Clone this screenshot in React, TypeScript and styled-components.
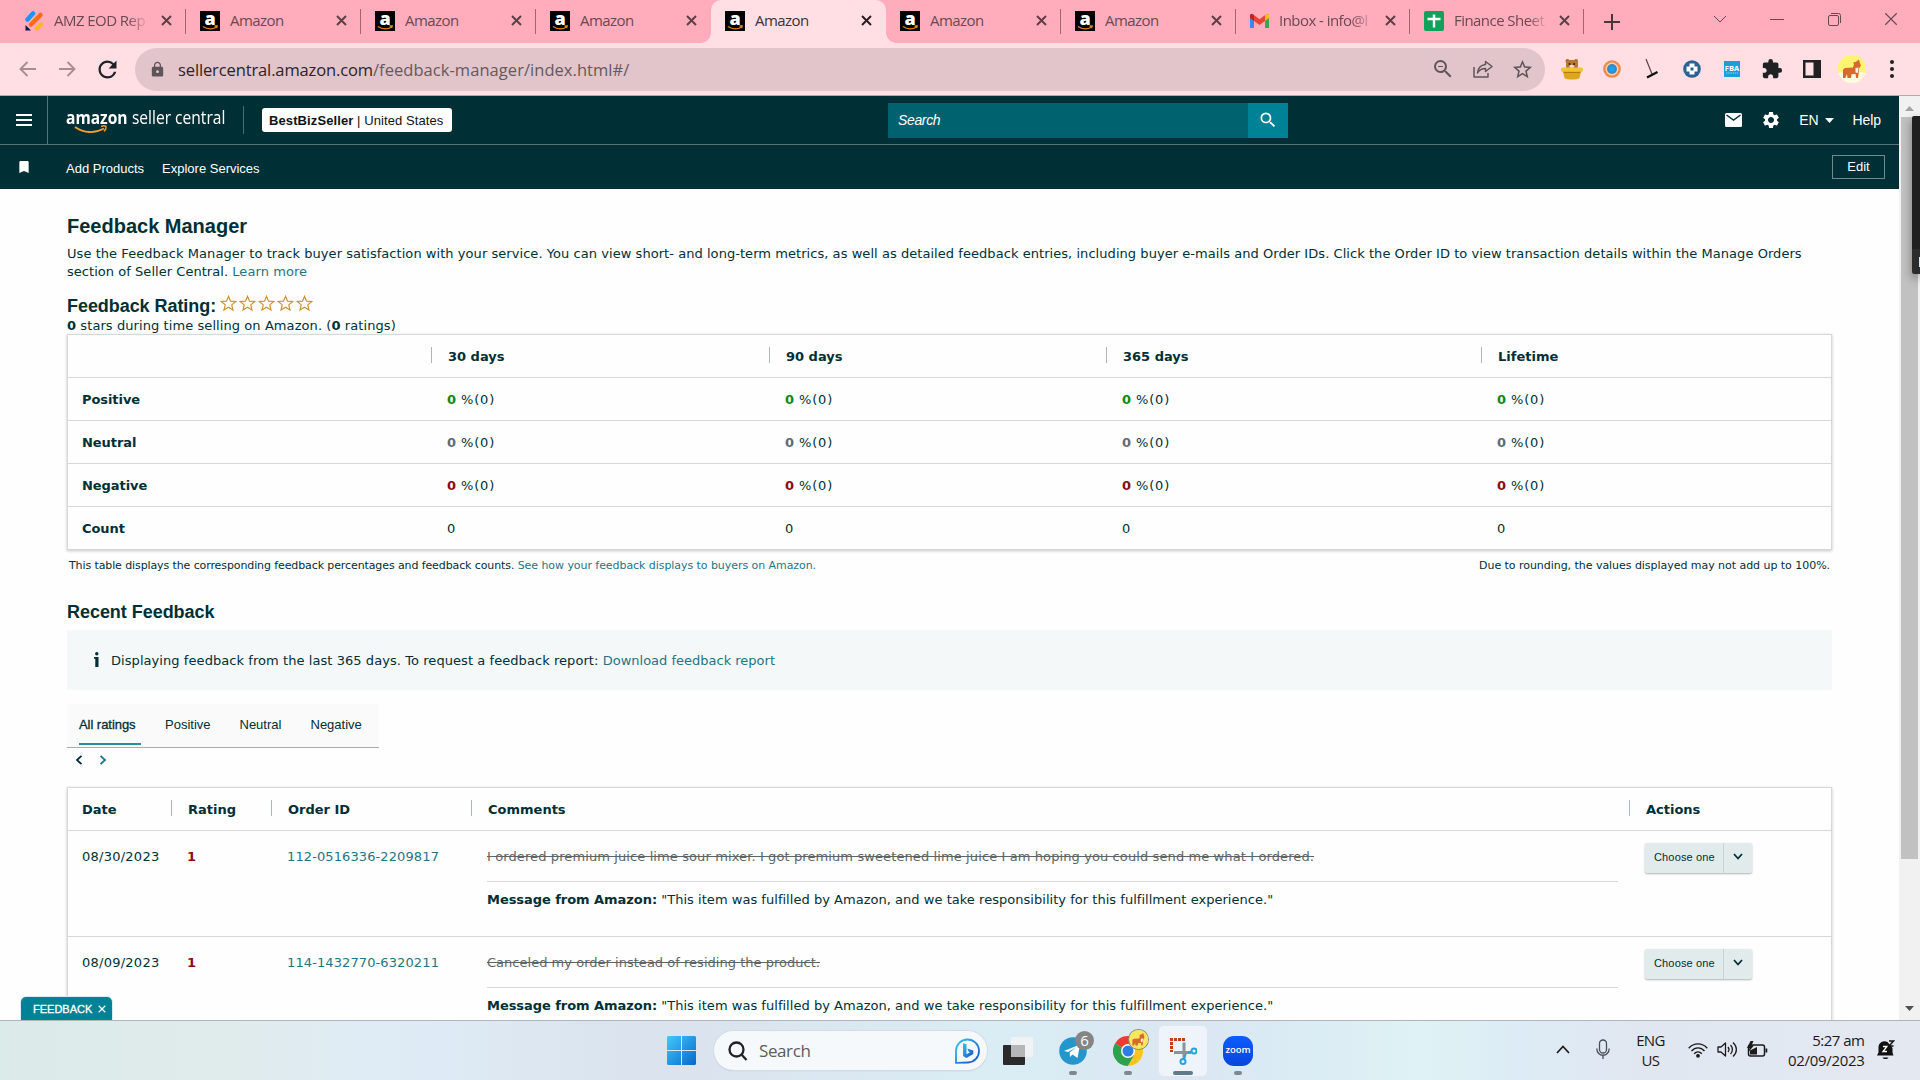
import React from 'react';
import styled, { createGlobalStyle } from 'styled-components';
import { MdLock, MdRefresh, MdZoomOut, MdStarBorder, MdExtension, MdSettings, MdBookmark, MdSearch } from 'react-icons/md';

const VERDANA = '"DejaVu Sans", Verdana, sans-serif';
const ARIAL = '"Liberation Sans", Arial, sans-serif';
const SEGOE = '"Open Sans", "Noto Sans", sans-serif';
const INK = '#002f36';
const LINK = '#1f7585';

const GlobalStyle = createGlobalStyle`
  * { box-sizing: border-box; }
  body { margin: 0; background: #fff; overflow: hidden; }
  svg { display: block; flex: none; }
`;

const Screen = styled.div`
  width: 1920px;
  height: 1080px;
  display: flex;
  flex-direction: column;
  position: relative;
  overflow: hidden;
`;

const Text = styled.span<{ $ls?: number }>`
  letter-spacing: ${(p) => p.$ls ?? 0}px;
  white-space: pre;
`;

/* ---------- browser tab strip ---------- */

const TabStrip = styled.div`
  height: 43px;
  flex: none;
  display: flex;
  background: #ffadbc;
  padding-left: 11px;
  font: 15px ${SEGOE};
  color: #6b4950;
`;

const Tab = styled.div<{ $active?: boolean; $divider?: boolean; $w?: number }>`
  width: ${(p) => p.$w ?? 175}px;
  flex: none;
  display: flex;
  align-items: center;
  padding: 0 14px 2px 14px;
  position: relative;
  color: ${(p) => (p.$active ? '#3c3236' : 'inherit')};
  background: ${(p) => (p.$active ? '#ffdfe4' : 'transparent')};
  border-radius: 10px 10px 0 0;

  &::after {
    content: '';
    display: ${(p) => (p.$divider ? 'block' : 'none')};
    position: absolute;
    right: 0;
    top: 9px;
    width: 1px;
    height: 25px;
    background: #a2666f;
  }
`;

const TabFoot = styled.i<{ $side: 'left' | 'right' }>`
  position: absolute;
  bottom: 0;
  ${(p) => p.$side}: -10px;
  width: 10px;
  height: 10px;
  background: radial-gradient(circle at ${(p) => (p.$side === 'left' ? '0 0' : '100% 0')}, transparent 9.5px, #ffdfe4 10px);
`;

const TabTitle = styled.span<{ $fade?: boolean }>`
  margin-left: 10px;
  width: 97px;
  overflow: hidden;
  white-space: nowrap;
  letter-spacing: -0.55px;
  padding-bottom: 1px;
  mask-image: ${(p) => (p.$fade ? 'linear-gradient(90deg, #000 76%, transparent 98%)' : 'none')};
`;

const TabClose = styled.span`
  margin-left: auto;
  display: flex;
`;

const NewTab = styled.div`
  width: 55px;
  display: flex;
  align-items: center;
  justify-content: center;
`;

const WindowControls = styled.div`
  margin-left: auto;
  display: flex;
  align-items: center;
  gap: 43.5px;
  padding: 0 22px 5px 0;
`;

/* ---------- browser toolbar ---------- */

const Toolbar = styled.div`
  height: 53px;
  flex: none;
  display: flex;
  align-items: center;
  background: #ffdfe4;
  border-bottom: 1px solid #b9a7ac;
  padding-left: 19px;
`;

const NavButtons = styled.div`
  width: 116px;
  flex: none;
  display: flex;
  align-items: center;
  gap: 23px;
  color: #202124;
`;

const ReloadIcon = styled(MdRefresh)`
  margin-left: -5px;
`;

const AddressBar = styled.div`
  width: 1410px;
  height: 43px;
  flex: none;
  border-radius: 22px;
  background: #e1c5ca;
  display: flex;
  align-items: center;
  padding: 0 11px 0 14px;
  color: #5f5559;
  font: 16.5px ${SEGOE};
`;

const Url = styled.span`
  margin-left: 12px;
  color: #66595d;
  white-space: nowrap;
  padding-top: 0;
  b { font-weight: 400; color: #2b2427; }
`;

const AddressActions = styled.div`
  margin-left: auto;
  display: flex;
  align-items: center;
  gap: 18px;
`;

const Extensions = styled.div`
  display: grid;
  grid-template-columns: repeat(9, 40px);
  align-items: center;
  justify-items: center;
  margin-left: 7px;
`;

/* ---------- page ---------- */

const Viewport = styled.div`
  height: 924px;
  flex: none;
  display: flex;
`;

const Page = styled.div`
  width: 1899px;
  flex: none;
  position: relative;
  overflow: hidden;
  background: #fefefe;
`;

const HeaderRow = styled.div`
  height: 49px;
  display: flex;
  align-items: center;
  background: ${INK};
  border-bottom: 1px solid #587478;
  color: #fff;
  font: 14px ${ARIAL};
`;

const MenuButton = styled.div`
  width: 48px;
  height: 48px;
  border-right: 1px solid #587478;
  display: flex;
  flex-direction: column;
  justify-content: center;
  gap: 3px;
  padding-left: 16px;
  i { width: 16px; height: 2px; background: #fff; }
`;

const Brand = styled.div`
  margin-left: 18px;
  width: 178px;
  height: 28px;
  position: relative;
  border-right: 1px solid #4f6c70;
  font: 18px/23px ${SEGOE};
  svg { position: absolute; left: 8px; top: 19px; }
`;

const BrandText = styled.div`
  transform: scaleX(0.865);
  transform-origin: 0 0;
  white-space: nowrap;
  b { margin-right: 5px; }
`;

const StoreBadge = styled.div`
  margin-left: 18px;
  width: 190px;
  height: 24px;
  background: #fff;
  border-radius: 3px;
  color: #111;
  font: 13px/25px ${ARIAL};
  padding-left: 7px;
`;

const SearchBox = styled.div`
  margin-left: 436px;
  width: 400px;
  height: 35px;
  display: flex;
  background: #00616f;
`;

const SearchLabel = styled.div`
  flex: 1;
  padding-left: 10px;
  font: italic 14px/35px ${ARIAL};
`;

const SearchButton = styled.div`
  width: 40px;
  background: #008296;
  display: flex;
  align-items: center;
  justify-content: center;
`;

const HeaderActions = styled.div`
  margin-left: auto;
  display: flex;
  align-items: center;
  padding-right: 18px;
`;

const Gap = styled.i<{ $w: number }>`
  width: ${(p) => p.$w}px;
  flex: none;
`;

const ShortcutRow = styled.div`
  height: 44px;
  display: flex;
  align-items: center;
  background: ${INK};
  color: #fff;
  font: 13px ${ARIAL};
  padding: 0 14px 0 16px;
`;

const Shortcuts = styled.div`
  margin-left: 33px;
  display: flex;
  gap: 18px;
  padding-top: 2px;
`;

const EditButton = styled.div`
  margin: 0 0 1px auto;
  width: 53px;
  height: 24px;
  border: 1px solid #6d8a8e;
  text-align: center;
  line-height: 22px;
`;

const Main = styled.main`
  width: 1765px;
  margin-left: 67px;
  padding-top: 23px;
  font: 13px/18px ${VERDANA};
  color: ${INK};
`;

const Heading1 = styled.h1`
  margin: 0;
  font: bold 20px/28px ${ARIAL};
`;

const Heading2 = styled.h2<{ $h: number; $mt: number }>`
  margin: ${(p) => p.$mt}px 0 0;
  font: bold 18px/${(p) => p.$h}px ${ARIAL};
  display: flex;
`;

const Stars = styled.span`
  display: flex;
  gap: 2px;
  margin: 0 0 0 3.5px;
`;

const Paragraph = styled.p`
  margin: 5px 0 0;
`;

const Line = styled.div<{ $ls?: number }>`
  white-space: pre;
  letter-spacing: ${(p) => p.$ls ?? 0}px;
`;

const Link = styled.a<{ $ls?: number }>`
  color: ${LINK};
  letter-spacing: ${(p) => p.$ls ?? 0}px;
`;

const Table = styled.div<{ $mt?: number }>`
  margin-top: ${(p) => p.$mt ?? 0}px;
  border: 1px solid #d5d9d9;
  box-shadow: 0 1px 3px rgba(0, 0, 0, 0.22);
  background: #fefefe;
`;

const SummaryRow = styled.div`
  display: grid;
  grid-template-columns: 363px 338px 337px 375px 350px;
  height: 43px;
  align-items: center;
  padding-top: 1px;
  border-bottom: 1px solid #d5d9d9;
  &:last-child { border-bottom: 0; height: 42px; }
`;

const FeedbackHead = styled.div`
  display: grid;
  grid-template-columns: 103px 100px 200px 1158px 202px;
  height: 43px;
  align-items: center;
  border-bottom: 1px solid #d5d9d9;
`;

const FeedbackRow = styled(FeedbackHead)`
  height: 106px;
  align-items: start;
`;

const HeadCell = styled.div<{ $first?: boolean }>`
  height: 16px;
  margin-bottom: 3px;
  padding-left: ${(p) => (p.$first ? 14 : 16)}px;
  border-left: ${(p) => (p.$first ? '0' : '1px solid #aab7b8')};
  font-weight: 700;
  line-height: 19px;
`;

const LabelCell = styled.div`
  padding-left: 14px;
  font-weight: 700;
  letter-spacing: -0.07px;
`;

const ValueCell = styled.div<{ $tone?: string }>`
  padding-left: 16px;
  display: flex;
  gap: 5px;
  b { color: ${(p) => p.$tone}; }
`;

const Caption = styled.div`
  margin-top: 7px;
  padding: 0 2px;
  display: flex;
  justify-content: space-between;
  font-size: 11px;
`;

const Alert = styled.div`
  margin-top: 6px;
  height: 60px;
  background: #f4f8f9;
  display: flex;
  align-items: center;
  padding-left: 27px;
  gap: 12px;
  svg { margin-bottom: 2px; }
  div { padding-top: 1px; }
`;

const FilterTabs = styled.div`
  margin-top: 14px;
  width: 312px;
  height: 44px;
  background: #fafafa;
  border-bottom: 1px solid #a6adad;
  display: flex;
  gap: 24px;
  padding-left: 12px;
  font: 13px/41px ${ARIAL};
`;

const FilterTab = styled.div<{ $active?: boolean; $w: number }>`
  width: ${(p) => p.$w}px;
  height: 41px;
  border-bottom: ${(p) => (p.$active ? '2px solid #2a8f9a' : '0')};
  -webkit-text-stroke: ${(p) => (p.$active ? '0.3px' : '0')} ${INK};
`;

const Pager = styled.div`
  height: 24px;
  display: flex;
  align-items: center;
  gap: 16px;
  padding-left: 8px;
`;

const DateCell = styled.div`
  padding: 17px 0 0 14px;
`;

const RatingCell = styled.div`
  padding: 17px 0 0 16px;
  font-weight: 700;
  color: #8a0b13;
`;

const OrderCell = styled.div`
  padding: 17px 0 0 16px;
`;

const CommentCell = styled.div`
  margin-left: 16px;
  width: 1131px;
  padding-top: 17px;
`;

const Struck = styled.div`
  height: 34px;
  border-bottom: 1px solid #d5d9d9;
  color: #5d6566;
  text-decoration: line-through;
`;

const Message = styled.div`
  margin-top: 9px;
  white-space: pre;
`;

const ActionCell = styled.div`
  padding: 12px 0 0 16px;
`;

const SplitButton = styled.div`
  width: 107px;
  height: 30px;
  display: flex;
  background: #e2ebec;
  border-radius: 2px;
  box-shadow: 0 1px 2px rgba(0, 0, 0, 0.3);
  font: 11px/29px ${ARIAL};
  span { width: 78px; padding-left: 9px; }
  i {
    flex: 1;
    border-left: 1px solid #c9d3d4;
    display: flex;
    align-items: center;
    justify-content: center;
    padding-bottom: 3px;
  }
`;

const FeedbackTab = styled.div`
  position: absolute;
  left: 21px;
  bottom: 0;
  width: 91px;
  height: 23px;
  border-radius: 5px 5px 0 0;
  background: #008296;
  box-shadow: 0 0 0 1px #d5eef1;
  color: #fff;
  display: flex;
  align-items: center;
  gap: 6px;
  padding: 1px 0 0 12px;
  font: 11px ${ARIAL};
  -webkit-text-stroke: 0.3px #fff;
`;

const Scrollbar = styled.div`
  flex: 1;
  background: #f1f1f1;
  display: flex;
  flex-direction: column;
  align-items: center;
  padding: 10px 0 9px;
`;

const Thumb = styled.div`
  margin: 6px 1px 0 0;
  width: 17px;
  height: 742px;
  background: #c1c1c1;
`;

const DownArrow = styled.div`
  margin-top: auto;
`;

const EdgeWindow = styled.div`
  position: absolute;
  right: 0;
  top: 116px;
  width: 8px;
  height: 158px;
  background: linear-gradient(#202020 133px, #2c2c2c 133px);
  box-shadow: 0 4px 10px rgba(0, 0, 0, 0.4);
  border-radius: 2px 0 0 2px;
  &::after {
    content: '';
    position: absolute;
    right: 0;
    top: 141px;
    width: 1.5px;
    height: 10px;
    background: #dbe9f5;
  }
`;

/* ---------- taskbar ---------- */

const Taskbar = styled.div`
  height: 60px;
  flex: none;
  border-top: 1px solid #aeb6ba;
  display: flex;
  align-items: center;
  background: linear-gradient(90deg, #dbebe9 0, #e0ebeb 220px, #dfecf6 380px, #dae3ee 650px, #dbe5f0 760px, #d9edf4 1000px, #dbe7f2 1180px, #daebf4 1290px, #dff2f4 1420px, #dcebf5 1520px, #e1e7f1 1640px, #e3e8f1 1920px);
  font: 15px/20px ${SEGOE};
  color: #1b1b1b;
`;

const TaskSearch = styled.div`
  width: 273px;
  height: 39px;
  margin-left: 18px;
  border-radius: 20px;
  background: #f5f9fc;
  box-shadow: 0 0 0 1px #d3dce4, 0 1px 1px #a9b3bb;
  display: flex;
  align-items: center;
  padding: 0 6px 0 14px;
  font-size: 17px;
  color: #5d5d5d;
  svg:last-child { margin-left: auto; }
  span { margin-left: 11px; }
`;

const TaskItem = styled.div<{ $w: number; $active?: boolean }>`
  width: ${(p) => p.$w}px;
  height: 50px;
  position: relative;
  display: flex;
  align-items: center;
  justify-content: center;
  border-radius: 5px;
  background: ${(p) => (p.$active ? '#eff4fa' : 'transparent')};
  box-shadow: ${(p) => (p.$active ? '0 0 0 1px #e0e7ee' : 'none')};
  &::after {
    content: '';
    position: absolute;
    bottom: 1px;
    left: calc(50% - ${(p) => (p.$active ? 10 : 4)}px);
    width: ${(p) => (p.$active ? 20 : 8)}px;
    height: 4px;
    border-radius: 2px;
    background: ${(p) => (p.$active ? '#5f7a88' : '#7f888e')};
  }
`;

const Badge = styled.div`
  position: absolute;
  left: 26px;
  top: 5px;
  width: 19px;
  height: 19px;
  border-radius: 50%;
  background: #858585;
  color: #fff;
  text-align: center;
  font: 15px/19px ${SEGOE};
`;

const CorgiBadge = styled.div`
  position: absolute;
  left: 25px;
  top: 4px;
  border-radius: 50%;
  box-shadow: 0 0 0 1px #8b8b70;
`;

const ZoomLogo = styled.div`
  width: 30px;
  height: 30px;
  border-radius: 11px;
  background: linear-gradient(#0b5cff, #0a45dc);
  color: #fff;
  text-align: center;
  font: 600 9.5px/27px ${SEGOE};
`;

const Tray = styled.div`
  margin-left: auto;
  display: flex;
  align-items: center;
  padding: 0 25.5px 2px 0;
`;

const TwoLines = styled.div<{ $align: string; $w: number }>`
  width: ${(p) => p.$w}px;
  text-align: ${(p) => p.$align};
  white-space: nowrap;
`;

/* ---------- drawings ---------- */

const Cross = ({ size = 11, color = '#4a3237', w = 2 }) => (
  <svg width={size} height={size} viewBox="0 0 11 11" stroke={color} strokeWidth={w} fill="none">
    <path d="M1 1l9 9M10 1l-9 9" />
  </svg>
);

const AmazonIcon = () => (
  <svg width="20" height="20" viewBox="0 0 20 20" overflow="visible">
    <rect width="20" height="20" fill="#000" />
    <text x="10" y="13.500" textAnchor="middle" fontFamily="Open Sans" fontWeight="800" fontSize="18" fill="#fff">a</text>
    <path d="M3 15.500c4.500 3.200 10 3 13.500.4M14.500 15h2.700l-.6 2.200" stroke="#e08a1a" strokeWidth="1.300" fill="none" />
  </svg>
);

const FormIcon = () => (
  <svg width="19" height="20" viewBox="0 0 19 20" strokeLinecap="round" fill="none">
    <path d="M2.500 8.500L8 2.500" stroke="#1b96ff" strokeWidth="4.500" />
    <path d="M6 13.500L15.500 4" stroke="#ff6a13" strokeWidth="4.500" />
    <path d="M12 17.500l4-4" stroke="#ffb629" strokeWidth="4.500" />
    <path d="M.5 14v5.500H6z" fill="#0a1551" />
  </svg>
);

const GmailIcon = () => (
  <svg width="19" height="14" viewBox="0 0 19 14">
    <path d="M0 2v12h4V5z" fill="#4285f4" />
    <path d="M19 2v12h-4V5z" fill="#34a853" />
    <path d="M0 1.500C0 0 2-.5 3.500.7l6 4.600 6-4.600C17-.5 19 0 19 1.500V4l-9.500 7L0 4z" fill="#ea4335" />
    <path d="M15 1l.5-.3C17-.5 19 0 19 1.500V4l-4 3z" fill="#fbbc04" />
    <path d="M0 1.500C0 0 2-.5 3.500.7L4 1v6L0 4z" fill="#c5221f" />
  </svg>
);

const SheetsIcon = () => (
  <svg width="20" height="20" viewBox="0 0 20 20">
    <rect width="20" height="20" rx="2" fill="#12a15a" />
    <path d="M10 3.500v13M3.500 8h13" stroke="#fff" strokeWidth="2.400" />
  </svg>
);

const Arrow = ({ flip }: { flip?: boolean }) => (
  <svg width="17" height="16" viewBox="0 0 17 16" fill="none" stroke="#a98d93" strokeWidth="1.900" transform={flip ? 'scale(-1 1)' : undefined}>
    <path d="M17 8H2M8.500 1L1.500 8l7 7" />
  </svg>
);

const ShareIcon = () => (
  <svg width="20" height="18" viewBox="0 0 20 18" fill="none" stroke="#5f5559" strokeWidth="1.500" strokeLinejoin="round">
    <path d="M1 7v10h14v-4" />
    <path d="M12.500 1.500L19 6.500l-6.500 5V8.500C9 8.500 6.500 9.500 4.500 13 5 8.500 8 5 12.500 4.500z" />
  </svg>
);

const BearIcon = () => (
  <svg width="22" height="22" viewBox="0 0 22 22">
    <circle cx="6.500" cy="3" r="2" fill="#a86a35" />
    <circle cx="15" cy="3" r="2" fill="#a86a35" />
    <rect x="5" y="2" width="12" height="10" rx="4" fill="#b87439" />
    <circle cx="8.500" cy="6" r="1" fill="#3a2110" />
    <circle cx="13" cy="6" r="1" fill="#3a2110" />
    <ellipse cx="10.800" cy="8.500" rx="2.400" ry="1.800" fill="#f2dcc0" />
    <rect x="0" y="9.500" width="22" height="4.500" rx="2" fill="#f3c332" />
    <path d="M2 13.500h18l-1.500 6.500c-3 2-12 2-15 0z" fill="#e0a51f" />
    <path d="M2.500 14.500h17" stroke="#b07d12" />
  </svg>
);

const RingIcon = () => (
  <svg width="18" height="18" viewBox="0 0 18 18">
    <circle cx="9" cy="9" r="8.800" fill="#f08a4b" />
    <circle cx="9" cy="9" r="6.400" fill="#ffd3a6" />
    <circle cx="9" cy="9" r="5" fill="#3f86c8" />
    <circle cx="9" cy="9" r="2.800" fill="#12a6ee" />
  </svg>
);

const BroomIcon = () => (
  <svg width="14" height="22" viewBox="0 0 14 22" fill="none">
    <path d="M1 1l6 15" stroke="#5b4247" strokeWidth="1.200" />
    <path d="M2 19.500l10.500-5.500" stroke="#111" strokeWidth="2.400" />
  </svg>
);

const CrossDiscIcon = () => (
  <svg width="18" height="18" viewBox="0 0 18 18">
    <circle cx="9" cy="9" r="8.800" fill="#2b628f" />
    <path d="M6.500 3.500h5v3h3v5h-3v3h-5v-3h-3v-5h3z" fill="#fff" />
    <rect x="7.500" y="7.500" width="3" height="3" fill="#2b628f" />
  </svg>
);

const FbaIcon = () => (
  <svg width="16" height="16" viewBox="0 0 16 16">
    <rect width="16" height="16" fill="#1a9fd9" />
    <text x="8" y="9.500" textAnchor="middle" fontFamily="Open Sans" fontWeight="700" fontSize="7.500" fill="#fff">FBA</text>
    <path d="M2 12h12" stroke="#8fd0ee" strokeDasharray="1.500 .7" />
  </svg>
);

const SidePanelIcon = () => (
  <svg width="18" height="18" viewBox="0 0 18 18">
    <rect width="18" height="18" fill="#202124" />
    <rect x="2.500" y="2.500" width="8" height="13" fill="#ffdfe4" />
  </svg>
);

const Corgi = ({ size = 28, ring = '#fdf571', snow = true }) => (
  <svg width={size} height={size} viewBox="0 0 28 28">
    <circle cx="14" cy="14" r="14" fill={ring} />
    {snow && <path d="M.5 18c7-2 20-2 27 0A14 14 0 0 1 .5 18z" fill="#fffbe0" />}
    <path d="M5 14.500l2-1.500 8-.5 1-3.500-1-1.500 3-.8L21 4.500l1 4 1 2-2 3-.3 4.500-.7 5h-1.800l-.7-4-4 .2-.5 3.800H9.500l-.5-4-1.700 4H5z" fill="#d9692b" />
    <path d="M17.500 13l3-.5-.6 5.500-2.400-.5z" fill="#fff3df" />
  </svg>
);

const Dots = () => (
  <svg width="4" height="18" viewBox="0 0 4 18" fill="#202124">
    <circle cx="2" cy="2" r="2" />
    <circle cx="2" cy="9" r="2" />
    <circle cx="2" cy="16" r="2" />
  </svg>
);

const MailIcon = () => (
  <svg width="17" height="14" viewBox="0 0 17 14">
    <rect width="17" height="14" rx="1.500" fill="#fff" />
    <path d="M1.500 2l7 5 7-5" stroke={INK} strokeWidth="1.500" fill="none" />
  </svg>
);

const Caret = ({ up, color = '#fff', w = 9, h = 5 }: { up?: boolean; color?: string; w?: number; h?: number }) => (
  <svg width={w} height={h} viewBox="0 0 9 5" fill={color} preserveAspectRatio="none">
    <path d={up ? 'M0 5h9L4.500 0z' : 'M0 0h9L4.500 5z'} />
  </svg>
);

const Chevron = ({ d, color = INK, w = 8, h = 10, s = 1.8 }: { d: string; color?: string; w?: number; h?: number; s?: number }) => (
  <svg width={w} height={h} viewBox={`0 0 ${w} ${h}`} fill="none" stroke={color} strokeWidth={s}>
    <path d={d} />
  </svg>
);

const Star = () => (
  <svg width="17" height="17" viewBox="0 0 17 17" fill="none" stroke="#c8932f" strokeWidth="1.150">
    <path d="M8.500 1.300l2 4.800 5.300.4-4.050 3.400 1.300 5.200-4.550-2.800-4.550 2.800 1.300-5.200L1.200 6.500l5.300-.4z" />
  </svg>
);

const WindowsLogo = () => (
  <svg width="29" height="29" viewBox="0 0 29 29">
    <defs>
      <linearGradient id="win" x1="0" y1="0" x2="1" y2="1">
        <stop offset="0" stopColor="#45c8fb" />
        <stop offset="1" stopColor="#0568ca" />
      </linearGradient>
    </defs>
    <path fill="url(#win)" d="M1 0h13v14H0V1zM15 0h13l1 1v13H15zM0 15h14v14H1l-1-1zM15 15h14v13l-1 1H15z" />
  </svg>
);

const BingIcon = () => (
  <svg width="27" height="26" viewBox="0 0 27 26" fill="none">
    <defs>
      <linearGradient id="bing" x1="0" y1="0" x2="1" y2="1">
        <stop offset="0" stopColor="#35c4f0" />
        <stop offset="1" stopColor="#1b4fc4" />
      </linearGradient>
    </defs>
    <path d="M2 13A11.500 11.500 0 1 1 14 24.500L2 24.800z" stroke="url(#bing)" strokeWidth="1.800" />
    <path d="M9 5l3.500 1.200v10l3.500-2-1.500-.8-1.200-3 6 2.200v3.500L12.500 20 9 18z" fill="url(#bing)" />
  </svg>
);

const TaskViewIcon = () => (
  <svg width="30" height="28" viewBox="0 0 30 28">
    <rect x="0" y="8" width="22" height="20" rx="1" fill="#2a2a2a" />
    <rect x="8" y="0" width="22" height="20" rx="1" fill="#f3f3f3" opacity=".85" />
    <rect x="8" y="8" width="14" height="12" fill="#b5b6b8" />
  </svg>
);

const TelegramIcon = () => (
  <svg width="28" height="28" viewBox="0 0 28 28">
    <circle cx="14" cy="14" r="13.800" fill="#2496cc" />
    <path d="M5 14l16-6.500-2.500 13.500-5-3.500-2.500 2.500-.3-4.500 6.500-5.500-8 5z" fill="#fff" />
  </svg>
);

const ChromeIcon = () => (
  <svg width="30" height="30" viewBox="0 0 30 30">
    <path d="M15 15L2 7.500A15 15 0 0 1 28 7.500z" fill="#ea3d2f" />
    <path d="M15 15L2 7.500A15 15 0 0 0 15 30l6.500-11.200z" fill="#2da24c" />
    <path d="M15 8h13.300A15 15 0 0 1 15 30l6.500-11.200z" fill="#fcc31e" />
    <circle cx="15" cy="15" r="7" fill="#fff" />
    <circle cx="15" cy="15" r="5.500" fill="#2f7de9" />
  </svg>
);

const SnipIcon = () => (
  <svg width="28" height="28" viewBox="0 0 28 28" fill="none">
    <path d="M1 2.500h15M2.500 5v10M14.500 1v4" stroke="#c0401c" strokeWidth="3" strokeDasharray="3 1" />
    <path d="M15 5.500v16M5 15.500h17" stroke="#8b9298" strokeWidth="3" />
    <circle cx="25" cy="14" r="2.500" stroke="#27a3df" strokeWidth="2" />
    <circle cx="14" cy="24.500" r="2.500" stroke="#27a3df" strokeWidth="2" />
    <path d="M17 17l-2 5M19 15.500l3.500-1" stroke="#27a3df" strokeWidth="1.500" />
  </svg>
);

const MicIcon = () => (
  <svg width="14" height="21" viewBox="0 0 14 21" fill="none" stroke="#4a4d52" strokeWidth="1.300">
    <rect x="3.500" y="1" width="7" height="13" rx="3.500" />
    <path d="M.8 9.500c0 9 12.400 9 12.400 0M7 16.500V20" />
  </svg>
);

const WifiIcon = () => (
  <svg width="20" height="16" viewBox="0 0 20 16" fill="none" stroke="#1b1b1b" strokeWidth="1.400">
    <path d="M.7 6.200c5.200-5.800 13.400-5.800 18.600 0M3.500 9c3.700-4.200 9.300-4.200 13 0M6.200 11.800c2.200-2.600 5.400-2.600 7.600 0" />
    <circle cx="10" cy="13.800" r="1.200" fill="#1b1b1b" />
  </svg>
);

const SpeakerIcon = () => (
  <svg width="21" height="17" viewBox="0 0 21 17" fill="none" stroke="#1b1b1b" strokeWidth="1.300" strokeLinejoin="round">
    <path d="M1 6v5h3l4.500 4V2L4 6zM11 6c1.200 1.500 1.200 3.500 0 5M13.500 4c2.500 2.500 2.500 6.500 0 9M16 1.500c4.500 4 4.500 10 0 14" />
  </svg>
);

const BatteryIcon = () => (
  <svg width="21" height="17" viewBox="0 0 21 17">
    <rect x="1.500" y="4" width="16" height="11" rx="2" fill="none" stroke="#1b1b1b" strokeWidth="1.500" />
    <path d="M18.500 7.500h1.800v4h-1.800z" fill="#1b1b1b" />
    <path d="M3 13.500V9.500L10 6v7.500zM3.500 0L0 7h2.500L1.500 11 7 4.500H4.500L6.500 0z" fill="#1b1b1b" />
  </svg>
);

const BellIcon = () => (
  <svg width="18" height="20" viewBox="0 0 18 20">
    <path d="M0 15.500l1.500-3V7a6 6 0 0 1 9-5l5 6v4.500l1 3z" fill="#111" />
    <path d="M5.500 17.500h6c-1 2-5 2-6 0z" fill="#111" />
    <path d="M6 6.500h4l-4 5h4" stroke="#fff" strokeWidth="1.300" fill="none" />
    <path d="M12 1h4.500l-4.500 5h4.500" stroke="#111" strokeWidth="1.400" fill="none" />
  </svg>
);

/* ---------- data ---------- */

const tabs = [
  { icon: <FormIcon />, title: 'AMZ EOD Rep', fade: true, divider: true },
  { icon: <AmazonIcon />, title: 'Amazon', divider: true },
  { icon: <AmazonIcon />, title: 'Amazon', divider: true },
  { icon: <AmazonIcon />, title: 'Amazon' },
  { icon: <AmazonIcon />, title: 'Amazon', active: true },
  { icon: <AmazonIcon />, title: 'Amazon', divider: true },
  { icon: <AmazonIcon />, title: 'Amazon', divider: true },
  { icon: <GmailIcon />, title: 'Inbox - info@l', fade: true, divider: true, w: 174 },
  { icon: <SheetsIcon />, title: 'Finance Sheet', fade: true, divider: true, w: 174 },
];

const periods = ['30 days', '90 days', '365 days', 'Lifetime'];
const ratings = [
  { label: 'Positive', tone: '#0a8a0a' },
  { label: 'Neutral', tone: '#5f6b7a' },
  { label: 'Negative', tone: '#8a0b13' },
];

const feedback = [
  {
    date: '08/30/2023',
    order: '112-0516336-2209817',
    comment: 'I ordered premium juice lime sour mixer. I got premium sweetened lime juice I am hoping you could send me what I ordered.',
    ls: 0.106,
  },
  {
    date: '08/09/2023',
    order: '114-1432770-6320211',
    comment: 'Canceled my order instead of residing the product.',
    ls: 0.02,
  },
];

export default function App() {
  return (
    <Screen>
      <GlobalStyle />
      <TabStrip>
        {tabs.map((t, i) => (
          <Tab key={i} $active={t.active} $divider={t.divider} $w={t.w}>
            {t.active && <TabFoot $side="left" />}
            {t.icon}
            <TabTitle $fade={t.fade}>{t.title}</TabTitle>
            <TabClose><Cross color={t.active ? '#2a1e21' : '#5c3f45'} /></TabClose>
            {t.active && <TabFoot $side="right" />}
          </Tab>
        ))}
        <NewTab>
          <svg width="16" height="16" viewBox="0 0 16 16" stroke="#4c3439" strokeWidth="2"><path d="M8 0v16M0 8h16" /></svg>
        </NewTab>
        <WindowControls>
          <Chevron d="M1 1l6 6 6-6" w={14} h={8} s={1} color="#6b4950" />
          <Chevron d="M0 .5h14" w={14} h={1} s={1} color="#6b4950" />
          <svg width="13" height="13" viewBox="0 0 13 13" fill="none" stroke="#6b4950">
            <rect x=".5" y="2.500" width="10" height="10" rx="1.500" />
            <path d="M3 .5h7.500a2 2 0 0 1 2 2V10" />
          </svg>
          <Cross size={14} w={0.9} color="#6b4950" />
        </WindowControls>
      </TabStrip>

      <Toolbar>
        <NavButtons>
          <Arrow />
          <Arrow flip />
          <ReloadIcon size={27} />
        </NavButtons>
        <AddressBar>
          <MdLock size={17} />
          <Url>
            <b><Text $ls={-0.12}>sellercentral.amazon.com</Text></b>
            <Text $ls={0.05}>/feedback-manager/index.html#/</Text>
          </Url>
          <AddressActions>
            <MdZoomOut size={24} />
            <ShareIcon />
            <MdStarBorder size={23} />
          </AddressActions>
        </AddressBar>
        <Extensions>
          <BearIcon />
          <RingIcon />
          <BroomIcon />
          <CrossDiscIcon />
          <FbaIcon />
          <MdExtension size={22} color="#202124" />
          <SidePanelIcon />
          <Corgi />
          <Dots />
        </Extensions>
      </Toolbar>

      <Viewport>
        <Page>
          <HeaderRow>
            <MenuButton><i /><i /><i /></MenuButton>
            <Brand>
              <BrandText><b>amazon</b>seller central</BrandText>
              <svg width="34" height="9" viewBox="0 0 34 9" fill="none" stroke="#f39c2f" strokeWidth="1.900">
                <path d="M1 2c9 6.500 20 6.500 29 1.500" />
                <path d="M27 1.500c2-.8 4-.8 5-.2.300 1.500-.5 3.500-2 5" strokeWidth="1.400" />
              </svg>
            </Brand>
            <StoreBadge>
              <b><Text $ls={0.1}>BestBizSeller</Text></b>
              <Text $ls={0.08}> | United States</Text>
            </StoreBadge>
            <SearchBox>
              <SearchLabel><Text $ls={-0.35}>Search</Text></SearchLabel>
              <SearchButton><MdSearch size={20} color="#fff" /></SearchButton>
            </SearchBox>
            <HeaderActions>
              <MailIcon />
              <Gap $w={19} />
              <MdSettings size={20} color="#fff" />
              <Gap $w={18} />
              <Text>EN</Text>
              <Gap $w={6} />
              <Caret />
              <Gap $w={19} />
              <Text $ls={-0.1}>Help</Text>
            </HeaderActions>
          </HeaderRow>
          <ShortcutRow>
            <MdBookmark size={16} />
            <Gap $w={1} />
            <Shortcuts>
              <Text>Add Products</Text>
              <Text>Explore Services</Text>
            </Shortcuts>
            <EditButton>Edit</EditButton>
          </ShortcutRow>

          <Main>
            <Heading1>Feedback Manager</Heading1>
            <Paragraph>
              <Line>
                <Text $ls={0.053}>Use the Feedback Manager to track buyer satisfaction with your service. You can view short- and long-term metrics, as well as detailed feedback entries, including buyer e-mails and Order IDs. Click the Order ID to view transaction details within the Manage Orders</Text>
              </Line>
              <Line>
                <Text $ls={0.04}>section of Seller Central. </Text>
                <Link $ls={0.08}>Learn more</Link>
              </Line>
            </Paragraph>
            <Heading2 $h={22} $mt={14}>
              <Text $ls={-0.06}>Feedback Rating:</Text>
              <Stars><Star /><Star /><Star /><Star /><Star /></Stars>
            </Heading2>
            <Line $ls={0.08}><b>0</b> stars during time selling on Amazon. (<b>0</b> ratings)</Line>
            <Table $mt={-1}>
              <SummaryRow>
                <span />
                {periods.map((p) => <HeadCell key={p}>{p}</HeadCell>)}
              </SummaryRow>
              {ratings.map((r) => (
                <SummaryRow key={r.label}>
                  <LabelCell>{r.label}</LabelCell>
                  {periods.map((p) => (
                    <ValueCell key={p} $tone={r.tone}><b>0</b><Text $ls={0.8}>%(0)</Text></ValueCell>
                  ))}
                </SummaryRow>
              ))}
              <SummaryRow>
                <LabelCell>Count</LabelCell>
                {periods.map((p) => <ValueCell key={p}>0</ValueCell>)}
              </SummaryRow>
            </Table>
            <Caption>
              <Line>
                <Text $ls={-0.105}>This table displays the corresponding feedback percentages and feedback counts. </Text>
                <Link $ls={-0.06}>See how your feedback displays to buyers on Amazon.</Link>
              </Line>
              <Text $ls={-0.04}>Due to rounding, the values displayed may not add up to 100%.</Text>
            </Caption>

            <Heading2 $h={24} $mt={25}><Text $ls={-0.04}>Recent Feedback</Text></Heading2>
            <Alert>
              <svg width="5" height="15" viewBox="0 0 5 15" fill={INK}>
                <circle cx="2.800" cy="1.700" r="1.700" />
                <path d="M0 5h4.500v10H1.300V6.800H0z" />
              </svg>
              <Line>
                <Text $ls={0.065}>Displaying feedback from the last 365 days. To request a feedback report: </Text>
                <Link>Download feedback report</Link>
              </Line>
            </Alert>
            <FilterTabs>
              <FilterTab $active $w={62}><Text $ls={-0.05}>All ratings</Text></FilterTab>
              <FilterTab $w={50.5}>Positive</FilterTab>
              <FilterTab $w={47}>Neutral</FilterTab>
              <FilterTab $w={52}>Negative</FilterTab>
            </FilterTabs>
            <Pager>
              <Chevron d="M6.500 .8L2 5l4.500 4.200" />
              <Chevron d="M1.500 .8L6 5l-4.500 4.200" color={LINK} />
            </Pager>

            <Table $mt={15}>
              <FeedbackHead>
                <HeadCell $first>Date</HeadCell>
                <HeadCell>Rating</HeadCell>
                <HeadCell>Order ID</HeadCell>
                <HeadCell>Comments</HeadCell>
                <HeadCell>Actions</HeadCell>
              </FeedbackHead>
              {feedback.map((f) => (
                <FeedbackRow key={f.order}>
                  <DateCell><Text $ls={0.25}>{f.date}</Text></DateCell>
                  <RatingCell>1</RatingCell>
                  <OrderCell><Link $ls={0.106}>{f.order}</Link></OrderCell>
                  <CommentCell>
                    <Struck><Text $ls={f.ls}>{f.comment}</Text></Struck>
                    <Message>
                      <b><Text $ls={-0.05}>Message from Amazon:</Text></b>
                      <Text $ls={0.03}> "This item was fulfilled by Amazon, and we take responsibility for this fulfillment experience."</Text>
                    </Message>
                  </CommentCell>
                  <ActionCell>
                    <SplitButton>
                      <Text $ls={0.15}>Choose one</Text>
                      <i><Chevron d="M1 1l4 4.500L9 1" w={10} h={7} s={1.8} /></i>
                    </SplitButton>
                  </ActionCell>
                </FeedbackRow>
              ))}
            </Table>
          </Main>
          <FeedbackTab>
            <Text>FEEDBACK</Text>
            <Cross size={8} w={1.6} color="#fff" />
          </FeedbackTab>
        </Page>
        <Scrollbar>
          <Caret up color="#a3a3a3" />
          <Thumb />
          <DownArrow><Caret color="#505050" /></DownArrow>
        </Scrollbar>
      </Viewport>

      <Taskbar>
        <Gap $w={667} />
        <WindowsLogo />
        <TaskSearch>
          <svg width="20" height="20" viewBox="0 0 20 20" fill="none" stroke="#222" strokeWidth="2.300">
            <circle cx="8.500" cy="8.500" r="7" />
            <path d="M13.500 13.500l5 5.500" />
          </svg>
          <Text $ls={-0.4}>Search</Text>
          <BingIcon />
        </TaskSearch>
        <Gap $w={16} />
        <TaskViewIcon />
        <Gap $w={16} />
        <TaskItem $w={48}><TelegramIcon /><Badge>6</Badge></TaskItem>
        <Gap $w={7} />
        <TaskItem $w={48}><ChromeIcon /><CorgiBadge><Corgi size={19} ring="#f9e65c" snow={false} /></CorgiBadge></TaskItem>
        <Gap $w={7} />
        <TaskItem $w={48} $active><SnipIcon /></TaskItem>
        <Gap $w={7} />
        <TaskItem $w={48}><ZoomLogo>zoom</ZoomLogo></TaskItem>
        <Tray>
          <Chevron d="M1 8l6-6.500L13 8" w={14} h={9} s={1.7} color="#1b1b1b" />
          <Gap $w={26} />
          <MicIcon />
          <Gap $w={22} />
          <TwoLines $align="center" $w={38}><Text $ls={-0.6}>ENG</Text><br /><Text $ls={-0.5}>US</Text></TwoLines>
          <Gap $w={18} />
          <WifiIcon />
          <Gap $w={9} />
          <SpeakerIcon />
          <Gap $w={9} />
          <BatteryIcon />
          <Gap $w={17} />
          <TwoLines $align="right" $w={80}><Text $ls={-0.5}>5:27 am</Text><br /><Text $ls={-0.3}>02/09/2023</Text></TwoLines>
          <Gap $w={12} />
          <BellIcon />
        </Tray>
      </Taskbar>
      <EdgeWindow />
    </Screen>
  );
}
